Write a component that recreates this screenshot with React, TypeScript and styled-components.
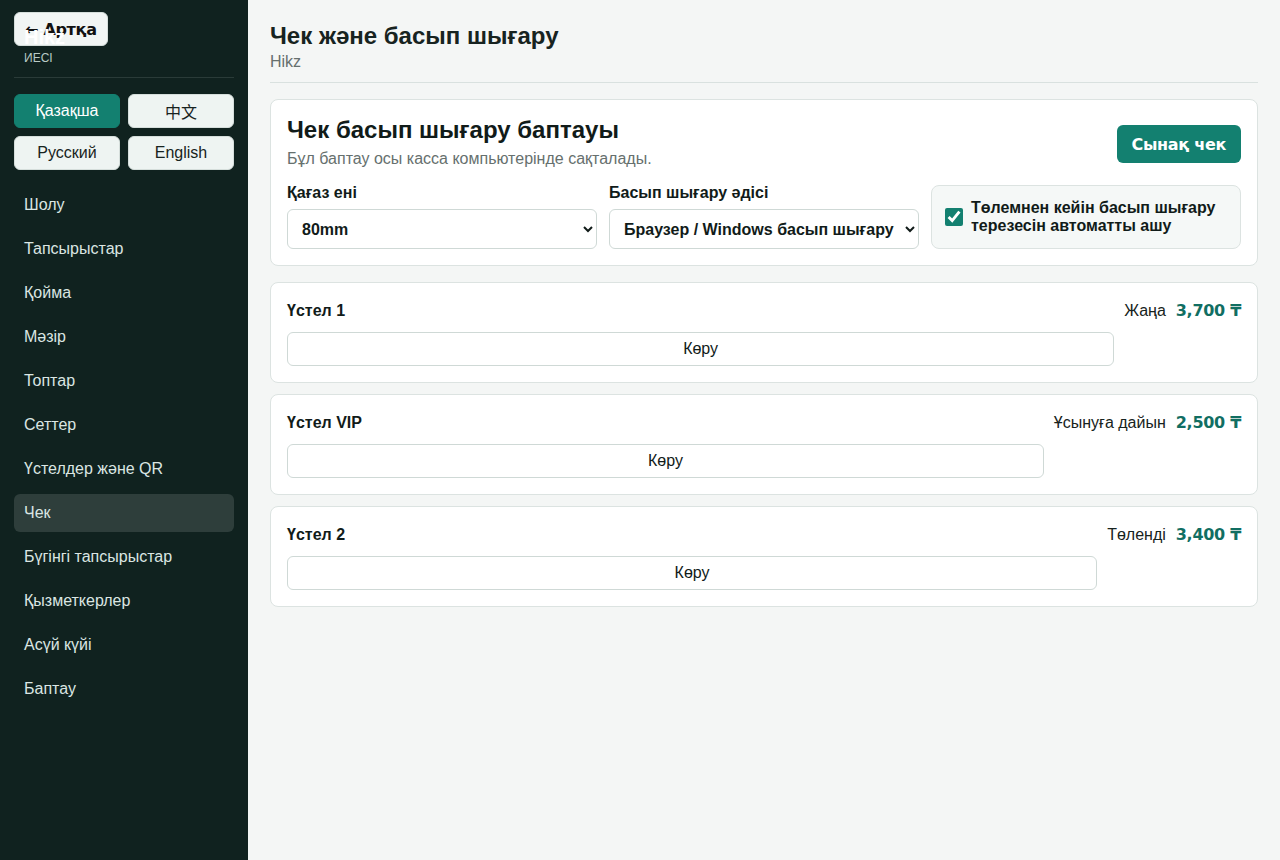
import React from 'react';
import styled, { createGlobalStyle } from 'styled-components';

const GlobalStyle = createGlobalStyle`
  * { box-sizing: border-box; }
  html, body { margin: 0; padding: 0; }
  body {
    font-family: "Liberation Sans", Arial, sans-serif;
    background: #f4f6f5;
    color: #172320;
  }
`;

const navItems = [
  'Шолу',
  'Тапсырыстар',
  'Қойма',
  'Мәзір',
  'Топтар',
  'Сеттер',
  'Үстелдер және QR',
  'Чек',
  'Бүгінгі тапсырыстар',
  'Қызметкерлер',
  'Асүй күйі',
  'Баптау',
];

const languages = [
  { label: 'Қазақша', active: true },
  { label: '中文', active: false },
  { label: 'Русский', active: false },
  { label: 'English', active: false },
];

const orders = [
  { name: 'Үстел 1', status: 'Жаңа', price: '3,700 ₸' },
  { name: 'Үстел VIP', status: 'Ұсынуға дайын', price: '2,500 ₸' },
  { name: 'Үстел 2', status: 'Төленді', price: '3,400 ₸' },
];

export default function App() {
  return (
    <>
      <GlobalStyle />
      <Layout>
        <Sidebar>
          <Brand>
            <BackButton>← Артқа</BackButton>
            <BrandName>Hikz</BrandName>
            <BrandRole>ИЕСІ</BrandRole>
          </Brand>
          <Divider />
          <LangGrid>
            {languages.map(l => (
              <LangButton key={l.label} $active={l.active}>{l.label}</LangButton>
            ))}
          </LangGrid>
          <Nav>
            {navItems.map(item => (
              <NavItem key={item} $active={item === 'Чек'}>{item}</NavItem>
            ))}
          </Nav>
        </Sidebar>

        <Main>
          <PageHeader>
            <PageTitle>Чек және басып шығару</PageTitle>
            <PageSub>Hikz</PageSub>
          </PageHeader>

          <Card>
            <SettingsHead>
              <div>
                <CardTitle>Чек басып шығару баптауы</CardTitle>
                <CardSub>Бұл баптау осы касса компьютерінде сақталады.</CardSub>
              </div>
              <PrimaryButton>Сынақ чек</PrimaryButton>
            </SettingsHead>
            <Fields>
              <Field>
                <FieldLabel>Қағаз ені</FieldLabel>
                <Select defaultValue="80">
                  <option value="80">80mm</option>
                  <option value="58">58mm</option>
                </Select>
              </Field>
              <Field>
                <FieldLabel>Басып шығару әдісі</FieldLabel>
                <Select defaultValue="browser">
                  <option value="browser">Браузер / Windows басып шығару</option>
                </Select>
              </Field>
              <CheckBox>
                <Check type="checkbox" defaultChecked />
                <span>Төлемнен кейін басып шығару терезесін автоматты ашу</span>
              </CheckBox>
            </Fields>
          </Card>

          <OrderList>
            {orders.map(o => (
              <OrderCard key={o.name}>
                <OrderLeft>
                  <OrderName>{o.name}</OrderName>
                  <ViewButton>Көру</ViewButton>
                </OrderLeft>
                <OrderRight>
                  <Status>{o.status}</Status>
                  <Price>{o.price}</Price>
                </OrderRight>
              </OrderCard>
            ))}
          </OrderList>
        </Main>
      </Layout>
    </>
  );
}

const Layout = styled.div`
  display: flex;
  min-height: 860px;
`;

const Sidebar = styled.aside`
  width: 248px;
  flex-shrink: 0;
  background: #10221f;
  padding: 12px 14px;
  display: flex;
  flex-direction: column;
`;

const Brand = styled.div`
  position: relative;
  padding: 13px 10px 0;
  height: 64px;
`;

const BrandName = styled.div`
  position: relative;
  color: #ffffff;
  font-size: 20px;
  font-weight: 700;
  line-height: 24px;
`;

const BrandRole = styled.div`
  color: #b9cac6;
  font-size: 12px;
  line-height: 14px;
  margin-top: 2px;
`;

const BackButton = styled.button`
  position: absolute;
  top: 0;
  left: 0;
  height: 34px;
  padding: 0 10px;
  border: 1px solid #d5dedb;
  border-radius: 6px;
  background: #f1f5f4;
  color: #111;
  font-family: "DejaVu Sans", Verdana, sans-serif;
  font-weight: 700;
  font-size: 16px;
  letter-spacing: -0.3px;
`;

const Divider = styled.div`
  height: 1px;
  background: #2a3b38;
  margin: 1px 0 16px;
`;

const LangGrid = styled.div`
  display: grid;
  grid-template-columns: 1fr 1fr;
  gap: 8px;
  margin-bottom: 16px;
`;

const LangButton = styled.button<{ $active: boolean }>`
  height: 34px;
  border-radius: 6px;
  border: 1px solid ${p => (p.$active ? '#138070' : '#d5dedb')};
  background: ${p => (p.$active ? '#138070' : '#eef4f2')};
  color: ${p => (p.$active ? '#ffffff' : '#172320')};
  font-family: "Liberation Sans", "Noto Sans CJK SC", Arial, sans-serif;
  font-size: 16px;
`;

const Nav = styled.nav`
  display: flex;
  flex-direction: column;
  gap: 6px;
`;

const NavItem = styled.div<{ $active: boolean }>`
  height: 38px;
  display: flex;
  align-items: center;
  padding: 0 10px;
  border-radius: 6px;
  font-size: 16px;
  color: #dbe6e3;
  background: ${p => (p.$active ? '#2e3e3b' : 'transparent')};
`;

const Main = styled.main`
  flex: 1;
  padding: 22px;
  display: flex;
  flex-direction: column;
  gap: 11px;
`;

const PageHeader = styled.header`
  border-bottom: 1px solid #d9e1df;
  padding-bottom: 8px;
  margin-bottom: 5px;
`;

const PageTitle = styled.h1`
  margin: 0;
  font-size: 24px;
  line-height: 28px;
  font-weight: 700;
  color: #172320;
`;

const PageSub = styled.div`
  font-size: 16px;
  color: #66706e;
  line-height: 24px;
`;

const Card = styled.section`
  background: #ffffff;
  border: 1px solid #dce3e1;
  border-radius: 8px;
  padding: 15px 16px 16px;
`;

const SettingsHead = styled.div`
  display: flex;
  justify-content: space-between;
  align-items: flex-start;
`;

const CardTitle = styled.h2`
  margin: 0;
  font-size: 24px;
  line-height: 30px;
  font-weight: 700;
  color: #111b19;
`;

const CardSub = styled.div`
  font-size: 16px;
  line-height: 20px;
  color: #66706e;
  margin-top: 4px;
`;

const PrimaryButton = styled.button`
  height: 38px;
  padding: 0 15px;
  border: none;
  border-radius: 6px;
  background: #138070;
  color: #ffffff;
  font-family: "DejaVu Sans", Verdana, sans-serif;
  font-weight: 700;
  font-size: 16px;
  letter-spacing: -0.3px;
  margin-top: 10px;
`;

const Fields = styled.div`
  display: grid;
  grid-template-columns: repeat(3, minmax(0, 1fr));
  gap: 12px;
  margin-top: 15px;
  align-items: end;
`;

const Field = styled.label`
  display: flex;
  flex-direction: column;
  gap: 7px;
`;

const FieldLabel = styled.span`
  font-size: 16px;
  font-weight: 700;
  line-height: 18px;
  color: #111b19;
`;

const Select = styled.select`
  width: 100%;
  height: 40px;
  border: 1px solid #cfd9d6;
  border-radius: 6px;
  background: #ffffff;
  padding: 0 0 0 10px;
  font-family: "Liberation Sans", Arial, sans-serif;
  font-size: 16px;
  font-weight: 700;
  color: #111b19;
`;

const CheckBox = styled.label`
  display: flex;
  align-items: center;
  gap: 8px;
  height: 64px;
  padding: 0 13px;
  border: 1px solid #dce3e1;
  border-radius: 8px;
  background: #f5f8f7;
  font-size: 16px;
  font-weight: 700;
  line-height: 18px;
  color: #111b19;
`;

const Check = styled.input`
  width: 18px;
  height: 18px;
  margin: 0;
  flex-shrink: 0;
  accent-color: #138070;
`;

const OrderList = styled.div`
  display: flex;
  flex-direction: column;
  gap: 11px;
  margin-top: 5px;
`;

const OrderCard = styled.section`
  background: #ffffff;
  border: 1px solid #dce3e1;
  border-radius: 8px;
  padding: 16px;
  display: flex;
  gap: 10px;
  align-items: flex-start;
`;

const OrderLeft = styled.div`
  flex: 1;
  display: flex;
  flex-direction: column;
  gap: 11px;
`;

const OrderName = styled.div`
  font-size: 16px;
  font-weight: 700;
  line-height: 20px;
  margin-top: 2px;
  color: #111b19;
`;

const ViewButton = styled.button`
  height: 34px;
  border: 1px solid #cfd9d6;
  border-radius: 6px;
  background: #ffffff;
  font-family: "Liberation Sans", Arial, sans-serif;
  font-size: 16px;
  color: #111b19;
`;

const OrderRight = styled.div`
  display: flex;
  align-items: baseline;
  gap: 10px;
  line-height: 22px;
  padding-top: 1px;
`;

const Status = styled.span`
  font-size: 16px;
  color: #172320;
`;

const Price = styled.span`
  font-size: 16px;
  font-weight: 700;
  color: #116e62;
  font-family: "DejaVu Sans", Verdana, sans-serif;
  letter-spacing: -0.3px;
`;
